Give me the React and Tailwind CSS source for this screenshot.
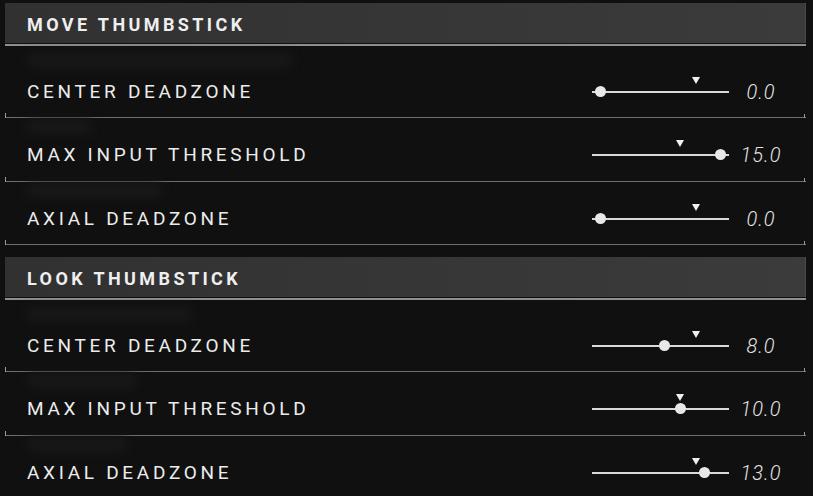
import React from "react";

const MAX = 15;

const sections = [
  {
    title: "MOVE THUMBSTICK",
    rows: [
      { label: "CENTER DEADZONE", value: 0, def: 12, ghostW: "w-[265px]" },
      { label: "MAX INPUT THRESHOLD", value: 15, def: 10, ghostW: "w-[65px]" },
      { label: "AXIAL DEADZONE", value: 0, def: 12, ghostW: "w-[135px]" },
    ],
  },
  {
    title: "LOOK THUMBSTICK",
    rows: [
      { label: "CENTER DEADZONE", value: 8, def: 12, ghostW: "w-[165px]" },
      { label: "MAX INPUT THRESHOLD", value: 10, def: 10, ghostW: "w-[110px]" },
      { label: "AXIAL DEADZONE", value: 13, def: 12, ghostW: "w-[100px]" },
    ],
  },
];

function Slider({ value, def }) {
  const knob = 8 + (value / MAX) * 120;
  const tri = 8 + (def / MAX) * 120;
  return (
    <div className="relative w-[137px] h-[24px] shrink-0">
      <div className="absolute left-0 right-0 top-[11px] h-[2px] bg-[#d9d9d9]" />
      <div
        className="absolute top-[6px] w-[11px] h-[11px] rounded-full bg-[#e8e8e8]"
        style={{ left: knob - 5.5 }}
      />
      <svg
        className="absolute top-[-3px]"
        style={{ left: tri - 4 }}
        width="8"
        height="7"
        viewBox="0 0 8 7"
      >
        <polygon points="0,0 8,0 4,7" fill="#f0f0f0" />
      </svg>
    </div>
  );
}

function Row({ row, index, last }) {
  const first = index === 0;
  const pad = first ? "pt-[34px] pb-[13px]" : index === 1 ? "pt-[25px] pb-[14px]" : "pt-[25px] pb-[13px]";
  return (
    <div
      className={`relative flex items-center ${pad} ${
        last ? "" : "border-b border-[#6e6e6e]"
      }`}
    >
      <div
        className={`absolute left-[22px] ${first ? "top-[7px]" : "top-[1px]"} ${row.ghostW} h-[15px] rounded-md bg-[#181818] blur-[5px]`}
      />
      <span
        className="relative pl-[22px] h-[24px] leading-[24px] text-[19px] tracking-[3.7px] text-[#ececec]"
        style={{ fontFamily: "Roboto, 'Liberation Sans', sans-serif" }}
      >
        {row.label}
      </span>
      <div className="ml-auto flex items-center">
        <Slider value={row.value} def={row.def} />
        <span
          className="ml-[7px] w-[50px] text-center h-[24px] leading-[24px] text-[20px] italic font-light tracking-[1px] text-[#e4e4e4]"
          style={{ fontFamily: "Roboto, 'Liberation Sans', sans-serif" }}
        >
          {row.value.toFixed(1)}
        </span>
        <span className="w-[20px]" />
      </div>
      {!last && (
        <>
          <span className="absolute left-0 bottom-[-1px] w-px h-[5px] bg-[#9a9a9a]" />
          <span className="absolute right-[1px] bottom-[-1px] w-px h-[4px] bg-[#9a9a9a]" />
        </>
      )}
    </div>
  );
}

function Header({ title }) {
  return (
    <div>
      <div className="h-[40px] flex items-center pt-[3px] pl-[22px] bg-gradient-to-r from-[#313131] to-[#3b3b3b] border-r border-[#4a4a4a]">
        <span
          className="text-[18px] font-bold tracking-[3.4px] text-[#efefef]"
          style={{ fontFamily: "Roboto, 'Liberation Sans', sans-serif" }}
        >
          {title}
        </span>
      </div>
      <div className="h-px" />
      <div className="h-[2px] bg-[#8e8e8e]" />
    </div>
  );
}

export default function App() {
  return (
    <div className="w-[813px] h-[496px] overflow-hidden bg-[#101010] pl-[5px] pr-[7px] pt-[3px]">
      {sections.map((s, si) => (
        <div key={s.title} className={si > 0 ? "mt-[12px]" : ""}>
          <Header title={s.title} />
          {s.rows.map((r, i) => (
            <Row
              key={r.label}
              row={r}
              index={i}
              last={si === sections.length - 1 && i === s.rows.length - 1}
            />
          ))}
        </div>
      ))}
    </div>
  );
}
